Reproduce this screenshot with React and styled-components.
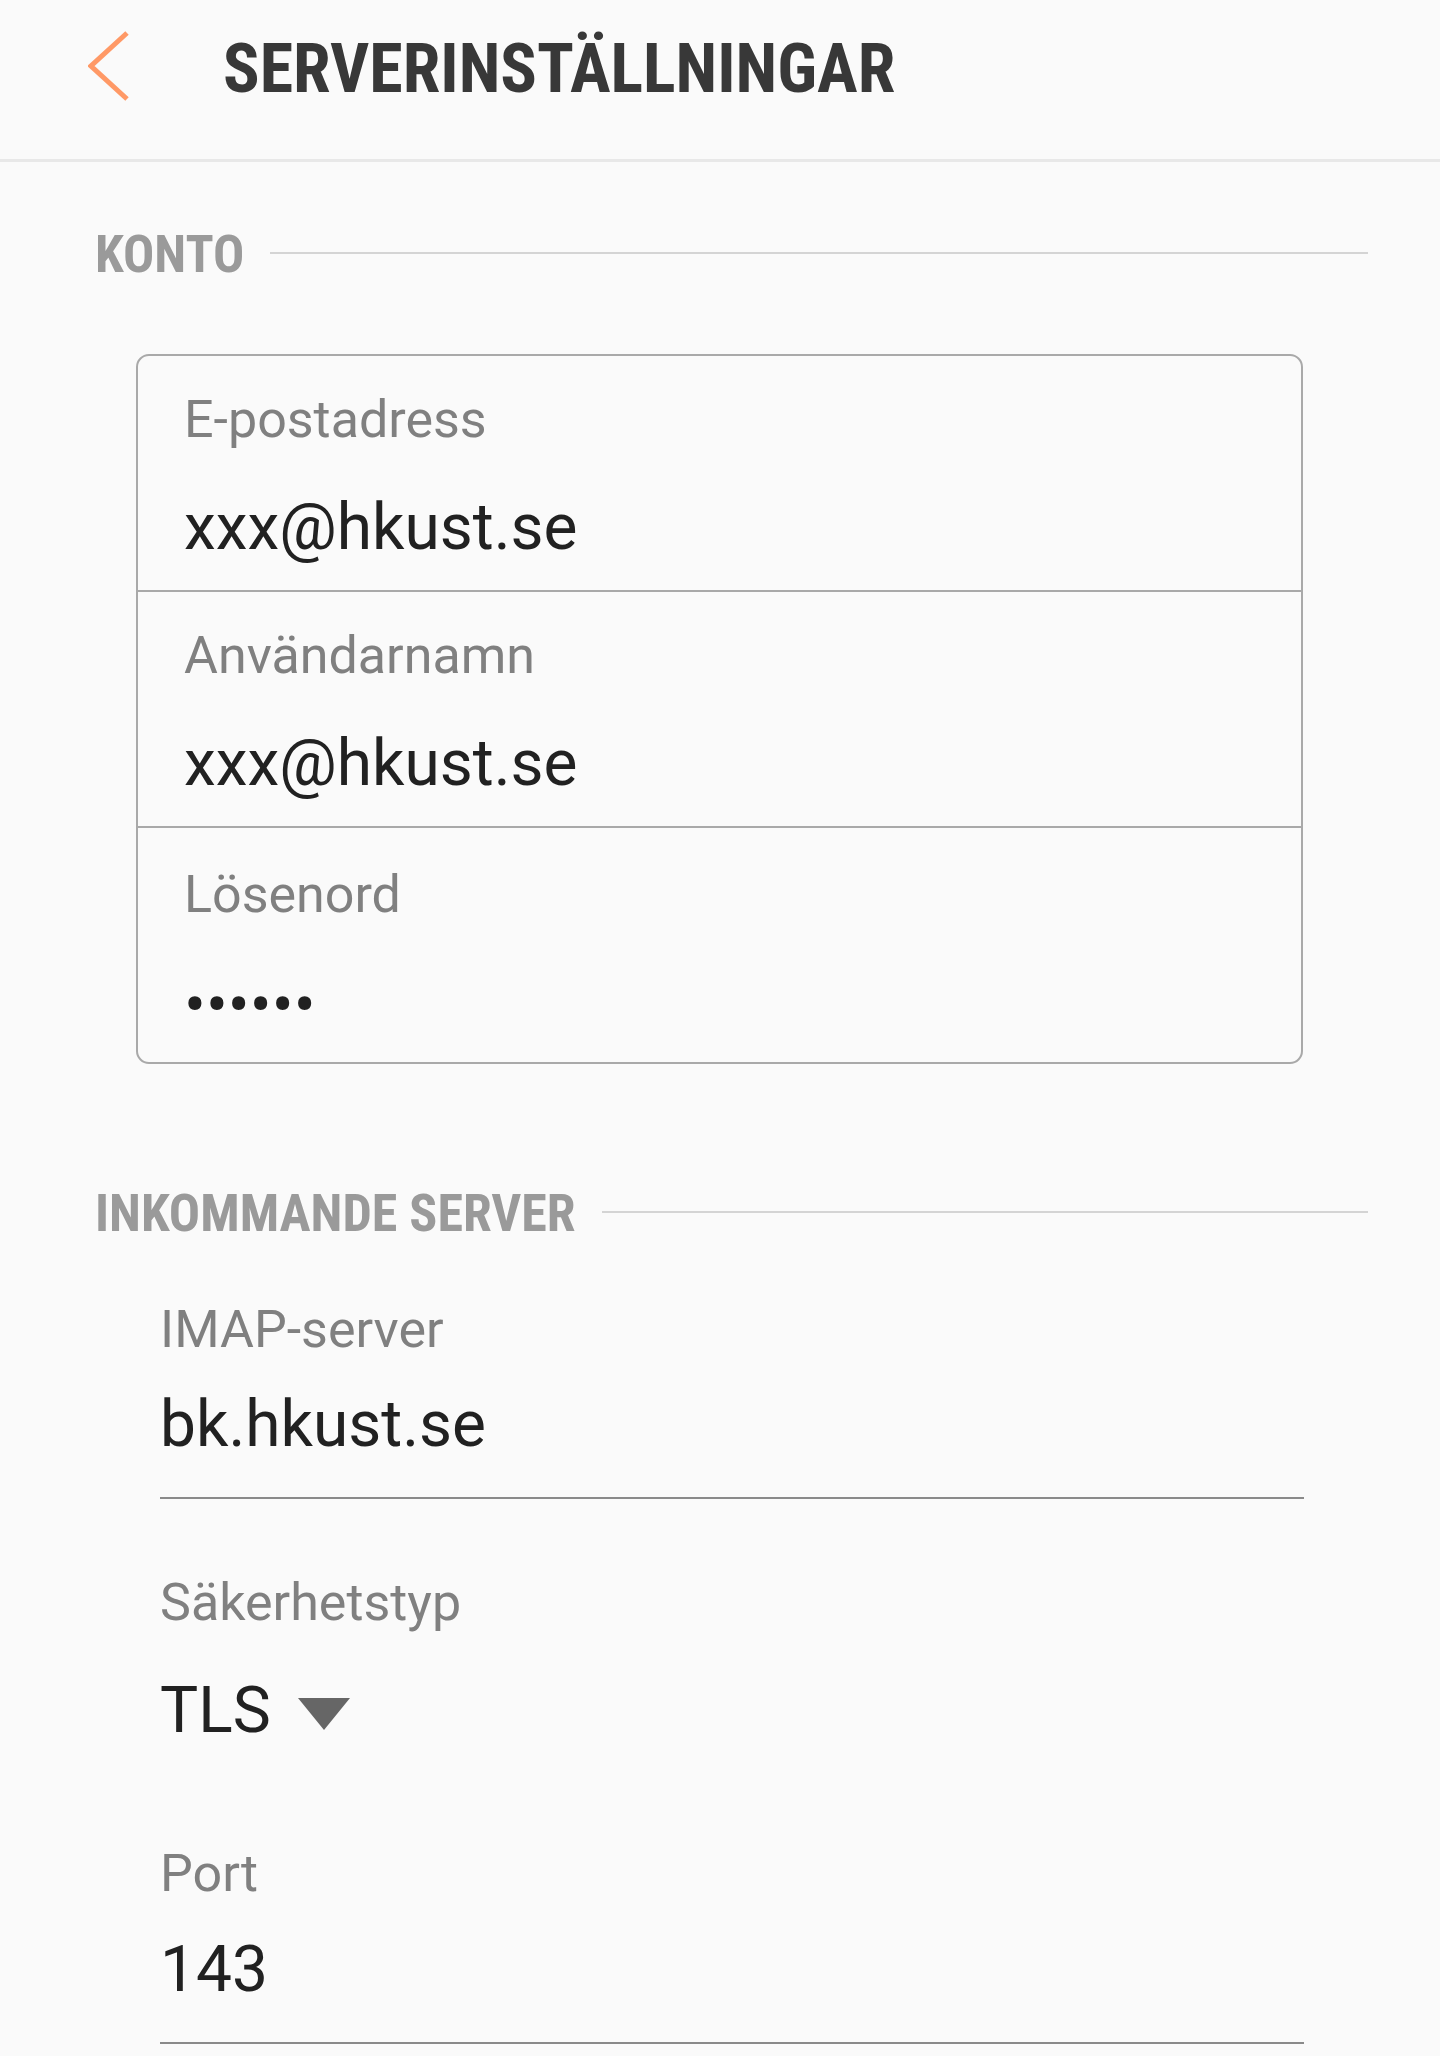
import React from "react";
import styled, { createGlobalStyle } from "styled-components";

const Global = createGlobalStyle`
  html, body { margin: 0; padding: 0; background: #fafafa; }
  body { font-family: "Roboto", "Liberation Sans", sans-serif; }
  * { box-sizing: border-box; }
`;

const Page = styled.div`
  width: 1440px;
  min-height: 2056px;
  background: #fafafa;
`;

const Header = styled.header`
  height: 162px;
  display: flex;
  align-items: flex-start;
  padding: 30px 0 0 88px;
  border-bottom: 3px solid #e8e8e8;
`;

const BackIcon = styled.svg`
  width: 44px;
  height: 72px;
  flex: none;
`;

const Title = styled.h1`
  margin: 5px 0 0 91px;
  font-family: "Roboto Condensed", "Roboto", sans-serif;
  font-stretch: condensed;
  font-weight: 700;
  font-size: 68px;
  line-height: 68px;
  color: #383838;
`;

const Main = styled.main`
  padding: 0 72px 0 95px;
`;

const SectionHead = styled.div`
  display: flex;
  align-items: center;
  margin-top: ${(p) => p.$top}px;
`;

const SectionTitle = styled.h2`
  margin: 0;
  font-family: "Roboto Condensed", "Roboto", sans-serif;
  font-stretch: condensed;
  font-weight: 700;
  font-size: 52px;
  line-height: 53px;
  color: #9a9a9a;
  white-space: nowrap;
`;

const SectionLine = styled.div`
  flex: 1;
  height: 2px;
  margin: 0 0 4px 26px;
  background: #d4d4d4;
`;

const Card = styled.div`
  margin: 73px 65px 0 41px;
  border: 2px solid #a9a9a9;
  border-radius: 13px;
`;

const CardRow = styled.div`
  height: 234px;
  padding: ${(p) => p.$top || 38}px 46px 0;
  & + & {
    border-top: 2px solid #a9a9a9;
    height: 236px;
  }
`;

const Label = styled.div`
  font-size: 52px;
  line-height: 52px;
  color: #808080;
`;

const Value = styled.div`
  margin-top: ${(p) => p.$gap}px;
  font-size: 64px;
  line-height: 65px;
  color: #212121;
  display: flex;
  align-items: center;
`;

const Dots = styled.span`
  font-size: 65px;
`;

const Fields = styled.div`
  margin: 0 64px 0 65px;
`;

const Field = styled.div`
  margin-top: ${(p) => p.$top}px;
  padding-bottom: ${(p) => (p.$underline ? 40 : 0)}px;
  border-bottom: ${(p) => (p.$underline ? "2px solid #8a8a8a" : "none")};
`;

const Caret = styled.span`
  width: 0;
  height: 0;
  margin: 6px 0 0 27px;
  border-left: 26px solid transparent;
  border-right: 26px solid transparent;
  border-top: 32px solid #666666;
`;

export default function App() {
  return (
    <Page>
      <Global />
      <Header>
        <BackIcon viewBox="0 0 44 72">
          <polyline
            points="39,3 3,36 39,69"
            fill="none"
            stroke="#FF9966"
            strokeWidth="5"
          />
        </BackIcon>
        <Title>SERVERINSTÄLLNINGAR</Title>
      </Header>
      <Main>
        <SectionHead $top={66}>
          <SectionTitle>KONTO</SectionTitle>
          <SectionLine />
        </SectionHead>
        <Card>
          <CardRow>
            <Label>E-postadress</Label>
            <Value $gap={49}>xxx@hkust.se</Value>
          </CardRow>
          <CardRow>
            <Label>Användarnamn</Label>
            <Value $gap={49}>xxx@hkust.se</Value>
          </CardRow>
          <CardRow $top={41}>
            <Label>Lösenord</Label>
            <Value $gap={52}>
              <Dots>••••••</Dots>
            </Value>
          </CardRow>
        </Card>
        <SectionHead $top={123}>
          <SectionTitle>INKOMMANDE SERVER</SectionTitle>
          <SectionLine />
        </SectionHead>
        <Fields>
          <Field $top={64} $underline>
            <Label>IMAP-server</Label>
            <Value $gap={36}>bk.hkust.se</Value>
          </Field>
          <Field $top={78}>
            <Label>Säkerhetstyp</Label>
            <Value $gap={49}>
              TLS
              <Caret />
            </Value>
          </Field>
          <Field $top={105} $underline>
            <Label>Port</Label>
            <Value $gap={37}>143</Value>
          </Field>
        </Fields>
      </Main>
    </Page>
  );
}
